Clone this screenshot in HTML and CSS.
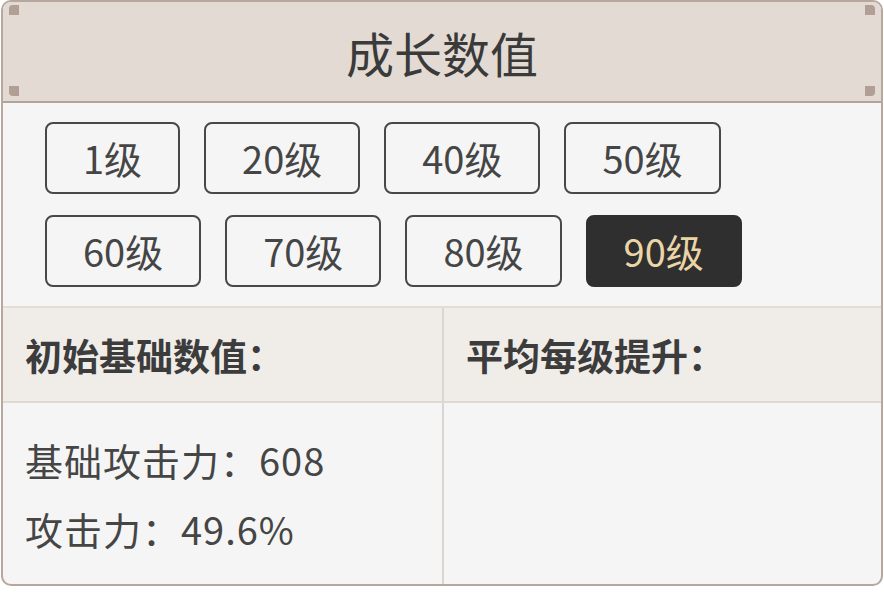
FILE: index.html
```html
<!DOCTYPE html>
<html lang="zh-CN">
<head>
  <meta charset="UTF-8">
  <title>成长数值</title>
  <meta name="viewport" content="width=device-width, initial-scale=1.0">
  <link rel="stylesheet" href="styles.css">
</head>
<body>

  <div class="card">
    <div class="card-head">
      <span class="dot dot-tl"></span>
      <span class="dot dot-bl"></span>
      <span class="dot dot-tr"></span>
      <span class="dot dot-br"></span>
      <h1>成长数值</h1>
    </div>

    <div class="levels">
      <button class="level">1级</button>
      <button class="level">20级</button>
      <button class="level">40级</button>
      <button class="level">50级</button>
      <button class="level">60级</button>
      <button class="level">70级</button>
      <button class="level">80级</button>
      <button class="level active">90级</button>
    </div>

    <div class="stats">
      <div class="stats-head">初始基础数值：</div>
      <div class="stats-head divider">平均每级提升：</div>
      <div class="stats-body">
        <p>基础攻击力：608</p>
        <p>攻击力：49.6%</p>
      </div>
      <div class="stats-body divider"></div>
    </div>
  </div>

</body>
</html>
```

FILE: styles.css
```css
* { margin: 0; padding: 0; box-sizing: border-box; }
body {
  background: white;
  font-family: "Noto Sans CJK SC", "Noto Sans", sans-serif;
  color: #444;
}
.card {
  margin: 0 1px;
  border: 2px solid #b8a79d;
  border-radius: 10px;
  overflow: hidden;
  background: #f5f5f5;
}
.card-head {
  position: relative;
  height: 101px;
  background: #e2dad3;
  border-bottom: 2px solid #b3a298;
  display: flex;
  align-items: center;
  justify-content: center;
}
.card-head h1 {
  font-size: 48px;
  font-weight: 400;
  line-height: 1;
  color: #3a3a3a;
}
.dot {
  position: absolute;
  width: 10px;
  height: 10px;
  background: #b19e95;
}
.dot-tl { left: 6px; top: 3px; border-top-left-radius: 4px; }
.dot-bl { left: 6px; bottom: 5px; border-bottom-left-radius: 4px; }
.dot-tr { right: 6px; top: 3px; border-top-right-radius: 4px; }
.dot-br { right: 6px; bottom: 5px; border-bottom-right-radius: 4px; }
.levels {
  display: flex;
  flex-wrap: wrap;
  gap: 21px 24px;
  max-width: 780px;
  padding: 19px 0 19px 42px;
}
.level {
  height: 72px;
  padding: 0 36px;
  border: 2px solid #484848;
  border-radius: 8px;
  background: transparent;
  color: #454545;
  font-family: inherit;
  font-size: 38px;
  line-height: 1;
  font-variant-numeric: proportional-nums;
}
.level.active {
  background: #2f2f2f;
  border-color: #2f2f2f;
  color: #ebd5a8;
}
.stats {
  display: grid;
  grid-template-columns: 1fr 1fr;
  border-top: 2px solid #e3ddd8;
}
.stats-head {
  height: 95px;
  background: #f0ece8;
  border-bottom: 2px solid #e0d9d3;
  display: flex;
  align-items: center;
  padding-left: 22px;
  font-size: 37px;
  font-weight: 700;
  color: #3c3c3c;
}
.divider {
  border-left: 2px solid #ddd6d0;
}
.stats-body {
  height: 181px;
  padding: 22px 0 0 22px;
  font-size: 38px;
  line-height: 69px;
  letter-spacing: 1px;
  color: #454545;
}
```
